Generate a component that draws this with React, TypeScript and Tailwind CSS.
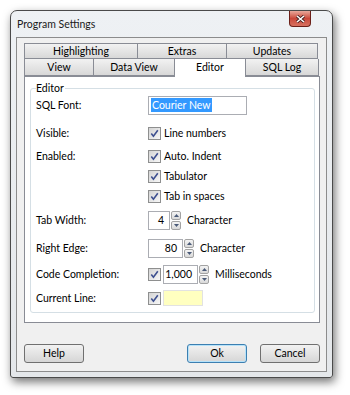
import React from "react";

function Check() {
  return (
    <span className="w-[13px] h-[13px] shrink-0 border border-[#8e8f8f] bg-linear-to-br from-[#d4d4d4] to-[#f7f7f7] flex items-center justify-center">
      <svg width="9" height="9" viewBox="0 0 9 9">
        <path d="M1.3 4.6 L3.4 7.2 L7.8 1.2" stroke="#3d4f8f" strokeWidth="1.6" fill="none" />
      </svg>
    </span>
  );
}

function Spin({ w, value }: { w: string; value: string }) {
  return (
    <div className="flex items-stretch h-[19px]">
      <div className={`${w} h-full border border-[#abadb3] bg-white flex items-center justify-end pr-[5px]`}>{value}</div>
      <div className="flex flex-col w-[10px] h-full ml-[1px] gap-[1px]">
        <div className="flex-1 border border-[#a3a3a3] rounded-[2px] bg-linear-to-b from-[#f4f4f4] to-[#d9d9d9] flex items-center justify-center">
          <svg width="5" height="3" viewBox="0 0 5 3"><path d="M0 3 L2.5 0 L5 3 Z" fill="#4a5a78" /></svg>
        </div>
        <div className="flex-1 border border-[#a3a3a3] rounded-[2px] bg-linear-to-b from-[#f4f4f4] to-[#d9d9d9] flex items-center justify-center">
          <svg width="5" height="3" viewBox="0 0 5 3"><path d="M0 0 L2.5 3 L5 0 Z" fill="#4a5a78" /></svg>
        </div>
      </div>
    </div>
  );
}

function Tab({ w, label, first }: { w: string; label: string; first?: boolean }) {
  return (
    <div
      className={`${w} h-full border border-[#898c95] ${first ? "" : "border-l-0"} bg-linear-to-b from-[#f2f2f2] to-[#d8d8d8] flex items-center justify-center`}
    >
      {label}
    </div>
  );
}

function Btn({ label, def }: { label: string; def?: boolean }) {
  return (
    <div
      className={`w-[60px] h-[19px] rounded-[3px] border ${def ? "border-[#3c7fb1] shadow-[inset_0_0_0_1px_#b6e2f9]" : "border-[#707070]"} bg-linear-to-b from-[#f2f2f2] to-[#d6d6d6] flex items-center justify-center`}
    >
      {label}
    </div>
  );
}

export default function App() {
  return (
    <div className="w-[350px] h-[395px] bg-white pt-[10px] pl-[10px] font-['Lato',sans-serif] text-[10.5px] leading-none text-black">
      <div className="w-[323px] h-[368px] rounded-t-[7px] rounded-b-[3px] border border-[#4a4a4a] bg-linear-to-b from-[#eef1f4] to-[#e4e7ea] shadow-[2px_4px_10px_rgba(0,0,0,0.55)] flex flex-col">
        {/* title bar */}
        <div className="h-[26px] flex items-start justify-between pl-[6px] pr-[21px]">
          <div className="pt-[8px] text-[10.5px] text-[#1a1a1a]">Program Settings</div>
          <div className="w-[22px] h-[16px] rounded-b-[4px] border border-t-0 border-[#6b1f18] bg-linear-to-b from-[#e8a89c] via-[#c9473a] to-[#d7705f] flex items-center justify-center">
            <svg width="9" height="8" viewBox="0 0 9 8">
              <path d="M1 1 L8 7 M8 1 L1 7" stroke="#3a1a1a" strokeWidth="3" />
              <path d="M1 1 L8 7 M8 1 L1 7" stroke="#ffffff" strokeWidth="1.6" />
            </svg>
          </div>
        </div>
        {/* client */}
        <div className="mx-[5px] mb-[5px] flex-1 border border-[#8c8c8c] bg-[#f0f0f0] flex flex-col pt-[5px] pl-[7px] pr-[7px]">
          {/* tabs */}
          <div className="w-[295px] h-[16px] flex">
            <Tab w="w-[114px]" label="Highlighting" first />
            <Tab w="w-[89px]" label="Extras" />
            <Tab w="w-[91px]" label="Updates" />
          </div>
          <div className="w-[295px] h-[17px] flex items-end">
            <div className="w-[70px] h-[17px] border border-t-0 border-[#898c95] bg-linear-to-b from-[#f2f2f2] to-[#d8d8d8] flex items-center justify-center">View</div>
            <div className="w-[81px] h-[17px] border border-t-0 border-l-0 border-[#898c95] bg-linear-to-b from-[#f2f2f2] to-[#d8d8d8] flex items-center justify-center">Data View</div>
            <div className="w-[71px] h-[19px] -mb-[1px] relative z-10 border border-b-0 border-l-0 border-[#898c95] bg-white flex items-start justify-center pt-[3px]">Editor</div>
            <div className="w-[73px] h-[17px] border border-t-0 border-l-0 border-[#898c95] bg-linear-to-b from-[#f2f2f2] to-[#d8d8d8] flex items-center justify-center">SQL Log</div>
          </div>
          {/* panel */}
          <div className="w-[296px] h-[247px] border border-[#898c95] bg-white pt-[11px] pl-[5px] pr-[4px]">
            <div className="relative h-[225px] border border-[#d5dfe5] rounded-[3px] pl-[5px]">
              <div className="absolute left-[5px] -top-[6px] bg-white pr-[1px]">Editor</div>
              <div className="flex flex-col pt-[6px]">
                <div className="h-[20px] flex items-center">
                  <div className="w-[112px]">SQL Font:</div>
                  <div className="w-[99px] h-[19px] border border-[#abadb3] bg-white flex items-center pl-[2px]">
                    <span className="bg-[#3399ff] text-white px-[1px] py-[2px]">Courier New</span>
                  </div>
                </div>
                <div className="h-[20px] mt-[8px] flex items-center">
                  <div className="w-[112px]">Visible:</div>
                  <Check />
                  <span className="ml-[3px]">Line numbers</span>
                </div>
                <div className="h-[20px] mt-[3px] flex items-center">
                  <div className="w-[112px]">Enabled:</div>
                  <Check />
                  <span className="ml-[3px]">Auto. Indent</span>
                </div>
                <div className="h-[20px] flex items-center">
                  <div className="w-[112px]"></div>
                  <Check />
                  <span className="ml-[3px]">Tabulator</span>
                </div>
                <div className="h-[20px] flex items-center">
                  <div className="w-[112px]"></div>
                  <Check />
                  <span className="ml-[3px]">Tab in spaces</span>
                </div>
                <div className="h-[20px] mt-[4px] flex items-center">
                  <div className="w-[112px]">Tab Width:</div>
                  <Spin w="w-[22px]" value="4" />
                  <span className="ml-[6px]">Character</span>
                </div>
                <div className="h-[20px] mt-[8px] flex items-center">
                  <div className="w-[112px]">Right Edge:</div>
                  <Spin w="w-[35px]" value="80" />
                  <span className="ml-[6px]">Character</span>
                </div>
                <div className="h-[20px] mt-[6px] flex items-center">
                  <div className="w-[112px]">Code Completion:</div>
                  <Check />
                  <div className="ml-[2px]">
                    <Spin w="w-[35px]" value="1,000" />
                  </div>
                  <span className="ml-[6px]">Milliseconds</span>
                </div>
                <div className="h-[20px] mt-[4px] flex items-center">
                  <div className="w-[112px]">Current Line:</div>
                  <Check />
                  <div className="ml-[2px] w-[40px] h-[16px] border border-[#e2e2e2] bg-[#ffffc0]"></div>
                </div>
              </div>
            </div>
          </div>
          {/* buttons */}
          <div className="mt-[21px] w-[296px] flex">
            <Btn label="Help" />
            <div className="flex-1" />
            <Btn label="Ok" def />
            <div className="w-[13px]" />
            <Btn label="Cancel" />
          </div>
        </div>
      </div>
    </div>
  );
}
